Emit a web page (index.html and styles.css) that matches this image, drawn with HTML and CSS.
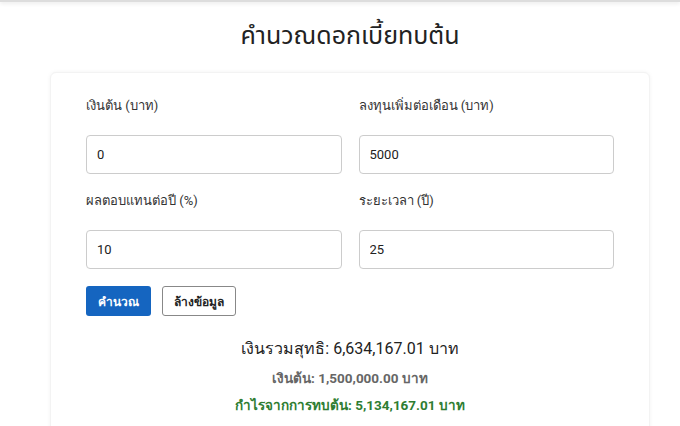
FILE: index.html
```html
<!DOCTYPE html>
<html lang="th">
<head>
    <meta charset="UTF-8">
    <meta name="viewport" content="width=device-width, initial-scale=1.0">
    <title>คำนวณดอกเบี้ยทบต้น</title>
    <link rel="stylesheet" href="styles.css">
</head>
<body>
    <div class="topbar"></div>
    <div class="page">
        <h1>คำนวณดอกเบี้ยทบต้น</h1>

        <div class="container">
            <div class="form-grid">
                <div class="field">
                    <label for="principal">เงินต้น (บาท)</label>
                    <input type="text" id="principal" value="0">
                </div>
                <div class="field">
                    <label for="monthly">ลงทุนเพิ่มต่อเดือน (บาท)</label>
                    <input type="text" id="monthly" value="5000">
                </div>
                <div class="field">
                    <label for="rate">ผลตอบแทนต่อปี (%)</label>
                    <input type="text" id="rate" value="10">
                </div>
                <div class="field">
                    <label for="years">ระยะเวลา (ปี)</label>
                    <input type="text" id="years" value="25">
                </div>
            </div>

            <div class="buttons">
                <button class="btn btn-primary">คำนวณ</button>
                <button class="btn btn-outline">ล้างข้อมูล</button>
            </div>

            <div class="result">
                <p class="total">เงินรวมสุทธิ: 6,634,167.01 บาท</p>
                <p class="invested">เงินต้น: 1,500,000.00 บาท</p>
                <p class="profit">กำไรจากการทบต้น: 5,134,167.01 บาท</p>
            </div>
        </div>
    </div>
</body>
</html>
```

FILE: styles.css
```css
* {
    margin: 0;
    padding: 0;
    box-sizing: border-box;
}

body {
    font-family: Roboto, "Noto Sans", sans-serif;
    background: #fff;
    color: #222;
}

.topbar {
    height: 2px;
    background: #ddd;
    box-shadow: 0 1px 4px rgba(0, 0, 0, 0.15);
}

.page {
    padding-left: 20px;
}

h1 {
    text-align: center;
    font-family: "Noto Sans Thai", sans-serif;
    font-size: 25px;
    line-height: 34px;
    font-weight: normal;
    color: #222;
    margin: 17px 0 19px;
}

.container {
    width: 600px;
    margin: 0 auto;
    padding: 24px 35px 20px;
    background: #fff;
    border: 1px solid #f3f3f3;
    border-radius: 6px;
    box-shadow: 0 0 4px rgba(0, 0, 0, 0.05);
}

.form-grid {
    display: grid;
    grid-template-columns: 1fr 1fr;
    column-gap: 17px;
    row-gap: 18px;
}

.field label {
    display: block;
    font-size: 13px;
    line-height: 18px;
    color: #333;
    margin-bottom: 20px;
}

.field input {
    width: 100%;
    height: 39px;
    padding: 0 10px;
    border: 1px solid #ccc;
    border-radius: 4px;
    font-family: Roboto, sans-serif;
    font-size: 13px;
    color: #222;
}

.buttons {
    display: flex;
    gap: 11px;
    margin-top: 17px;
}

.btn {
    height: 30px;
    padding: 0 12px;
    border-radius: 3px;
    font-size: 12px;
    font-weight: bold;
    font-family: Roboto, sans-serif;
    cursor: pointer;
}

.btn-primary {
    background: #1565c0;
    color: #fff;
    border: none;
}

.btn-outline {
    background: #fff;
    color: #222;
    border: 1px solid #888;
    padding: 0 11px;
}

.result {
    text-align: center;
    margin-top: 22px;
}

.total {
    font-size: 16px;
    line-height: 22px;
    color: #222;
}

.invested {
    font-size: 13.5px;
    line-height: 20px;
    font-weight: bold;
    color: #666;
    margin-top: 8px;
}

.profit {
    font-size: 13.5px;
    line-height: 20px;
    font-weight: bold;
    color: #2e7d32;
    margin-top: 7px;
}
```
